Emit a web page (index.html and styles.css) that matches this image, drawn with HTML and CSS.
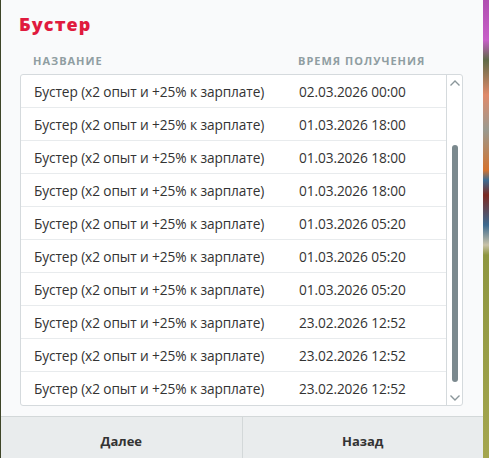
FILE: index.html
```html
<!DOCTYPE html>
<html lang="ru">
<head>
    <meta charset="UTF-8">
    <meta name="viewport" content="width=device-width, initial-scale=1.0">
    <title>Бустер</title>
    <link rel="stylesheet" href="styles.css">
</head>
<body>
    <div class="modal">
        <h1 class="modal-title">Бустер</h1>

        <div class="table-head">
            <span class="col-name">Название</span>
            <span class="col-time">Время получения</span>
        </div>

        <div class="list">
            <div class="rows">
                <div class="row"><span class="col-name">Бустер (x2 опыт и +25% к зарплате)</span><span class="col-time">02.03.2026 00:00</span></div>
                <div class="row"><span class="col-name">Бустер (x2 опыт и +25% к зарплате)</span><span class="col-time">01.03.2026 18:00</span></div>
                <div class="row"><span class="col-name">Бустер (x2 опыт и +25% к зарплате)</span><span class="col-time">01.03.2026 18:00</span></div>
                <div class="row"><span class="col-name">Бустер (x2 опыт и +25% к зарплате)</span><span class="col-time">01.03.2026 18:00</span></div>
                <div class="row"><span class="col-name">Бустер (x2 опыт и +25% к зарплате)</span><span class="col-time">01.03.2026 05:20</span></div>
                <div class="row"><span class="col-name">Бустер (x2 опыт и +25% к зарплате)</span><span class="col-time">01.03.2026 05:20</span></div>
                <div class="row"><span class="col-name">Бустер (x2 опыт и +25% к зарплате)</span><span class="col-time">01.03.2026 05:20</span></div>
                <div class="row"><span class="col-name">Бустер (x2 опыт и +25% к зарплате)</span><span class="col-time">23.02.2026 12:52</span></div>
                <div class="row"><span class="col-name">Бустер (x2 опыт и +25% к зарплате)</span><span class="col-time">23.02.2026 12:52</span></div>
                <div class="row"><span class="col-name">Бустер (x2 опыт и +25% к зарплате)</span><span class="col-time">23.02.2026 12:52</span></div>
            </div>
            <!-- скроллбар -->
            <div class="scrollbar">
                <svg class="arrow" width="12" height="8" viewBox="0 0 12 8"><path d="M1.5 6.5 L6 2 L10.5 6.5" fill="none" stroke="#8a969a" stroke-width="1.4"/></svg>
                <div class="track"><div class="thumb"></div></div>
                <svg class="arrow" width="12" height="8" viewBox="0 0 12 8"><path d="M1.5 1.5 L6 6 L10.5 1.5" fill="none" stroke="#8a969a" stroke-width="1.4"/></svg>
            </div>
        </div>

        <footer class="modal-footer">
            <button class="btn">Далее</button>
            <button class="btn">Назад</button>
        </footer>
    </div>
</body>
</html>
```

FILE: styles.css
```css
:root{
    --cor-title: hsl(349, 79%, 49%);
    --cor-head: hsl(195, 9%, 60%);
    --cor-text: hsl(0, 0%, 20%);
    --cor-line: hsl(200, 10%, 85%);
    --cor-modal: hsl(210, 20%, 98%);
    --cor-footer: hsl(190, 10%, 92%);
    --cor-thumb: hsl(195, 8%, 52%);

    --font-f: 'Open Sans', 'Noto Sans', sans-serif;
}

*{
    margin: 0px;
    padding: 0px;
    box-sizing: border-box;
}

body{
    width: 489px;
    height: 458px;
    overflow: hidden;
    font-family: var(--font-f);
    background-color: #3e4528;
    background-image: linear-gradient(to bottom,
        #b04fb0 0px, #c75fc8 40px, #5f6a48 60px, #e08a6a 95px,
        #9a9a90 130px, #d4732f 170px, #3d6d93 180px, #7c2a22 195px,
        #3c6a90 225px, #c9c2a8 245px, #8e9640 255px, #a4a64e 458px);
    background-size: 6px 100%;
    background-position: right top;
    background-repeat: no-repeat;
    padding-left: 1px;
}

.modal{
    width: 482px;
    height: 458px;
    background-color: var(--cor-modal);
    display: flex;
    flex-direction: column;
}

.modal-title{
    color: var(--cor-title);
    font-size: 18px;
    font-weight: 800;
    line-height: 18px;
    padding: 15px 0px 0px 18px;
    letter-spacing: 1.1px;
}

.table-head{
    display: flex;
    height: 41px;
    padding: 0px 0px 8px 32px;
    align-items: flex-end;
    color: var(--cor-head);
    font-size: 11px;
    line-height: 11px;
    font-weight: 700;
    text-transform: uppercase;
    letter-spacing: 1px;
}

.col-name{
    width: 265px;
}

.list{
    display: flex;
    margin-left: 19px;
    width: 443px;
    height: 332px;
    border: 1px solid var(--cor-line);
    border-radius: 3px;
    background-color: white;
}

.rows{
    flex: 1;
    display: flex;
    flex-direction: column;
}

.row{
    display: flex;
    align-items: center;
    height: 33px;
    padding-left: 13px;
    border-bottom: 1px solid hsl(200, 12%, 92%);
    color: var(--cor-text);
    font-size: 13.7px;
    letter-spacing: -0.1px;
}

.row:last-child{
    border-bottom: none;
}

.scrollbar{
    width: 16px;
    border-left: 1px solid var(--cor-line);
    display: flex;
    flex-direction: column;
    align-items: center;
    padding: 4px 0px 3px;
}

.track{
    flex: 1;
    width: 6px;
    padding: 58px 0px 12px;
    display: flex;
}

.thumb{
    flex: 1;
    border-radius: 3px;
    background-color: var(--cor-thumb);
}

.modal-footer{
    margin-top: auto;
    height: 42px;
    display: flex;
    border-top: 1px solid hsl(190, 8%, 84%);
    background-color: var(--cor-footer);
}

.btn{
    flex: 1;
    border: none;
    background: transparent;
    font-family: var(--font-f);
    font-size: 13px;
    font-weight: 700;
    color: hsl(0, 0%, 20%);
    padding-top: 6px;
}

.btn + .btn{
    border-left: 1px solid hsl(190, 8%, 84%);
}
```
